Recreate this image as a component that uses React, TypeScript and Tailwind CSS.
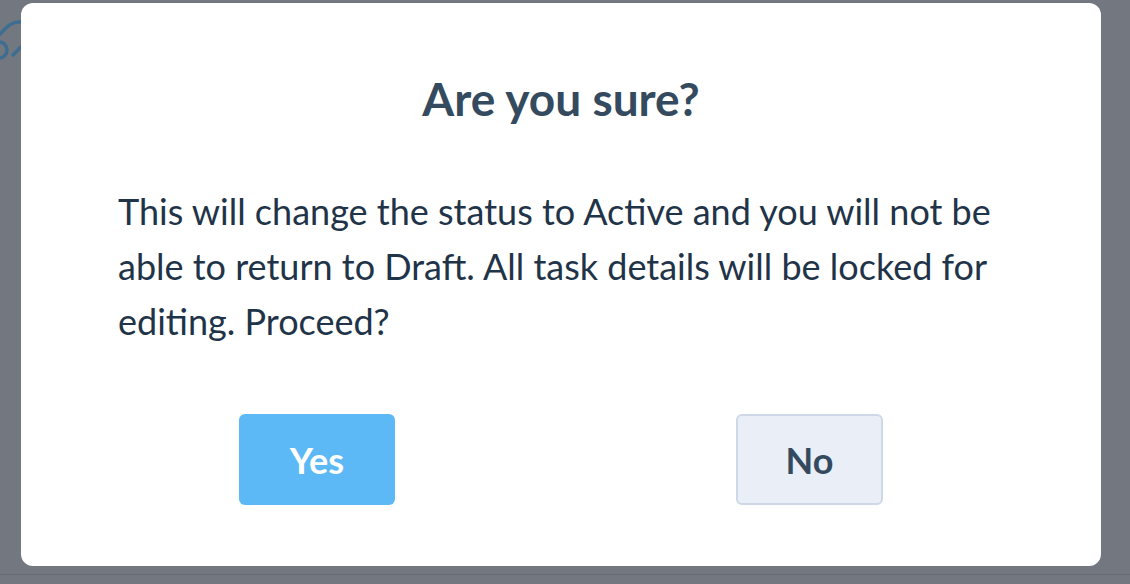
import React from "react";

export default function App() {
  return (
    <div className="relative w-[1130px] h-[584px] bg-[#737880] overflow-hidden" style={{ fontFamily: "Lato, 'Open Sans', sans-serif" }}>
      <div className="absolute left-0 right-0 top-[574px] h-px bg-[#666b73]" />
      <svg className="absolute left-0 top-0 overflow-visible" width="40" height="80" viewBox="0 0 40 80" fill="none" stroke="#3d6d90" strokeWidth="3.5" strokeLinecap="round">
        <path d="M-14 48 L6 28 Q12 22 19 22 L30 22" />
        <circle cx="-1" cy="50" r="8" />
        <path d="M13 55 L26 42" />
      </svg>
      <div className="absolute left-[21px] top-[3px] w-[1080px] h-[563px] bg-white rounded-[12px] flex flex-col items-center">
        <h1 className="mt-[70px] text-[46px] leading-[52px] font-bold text-[#344a5e]">Are you sure?</h1>
        <p className="mt-[59px] px-[97px] text-[36px] leading-[55px] text-[#1f3448] w-full">
          This will change the status to Active and you will not be able to return to Draft. All task details will be locked for editing. Proceed?
        </p>
        <div className="mt-[65px] w-full px-[218px] flex justify-between">
          <button className="w-[156px] h-[91px] rounded-[6px] bg-[#5cb9f6] text-white text-[36px] font-bold">Yes</button>
          <button className="w-[147px] h-[91px] rounded-[6px] bg-[#eaeef6] border-2 border-[#cfd8e6] text-[#344a5e] text-[36px] font-bold">No</button>
        </div>
      </div>
    </div>
  );
}
